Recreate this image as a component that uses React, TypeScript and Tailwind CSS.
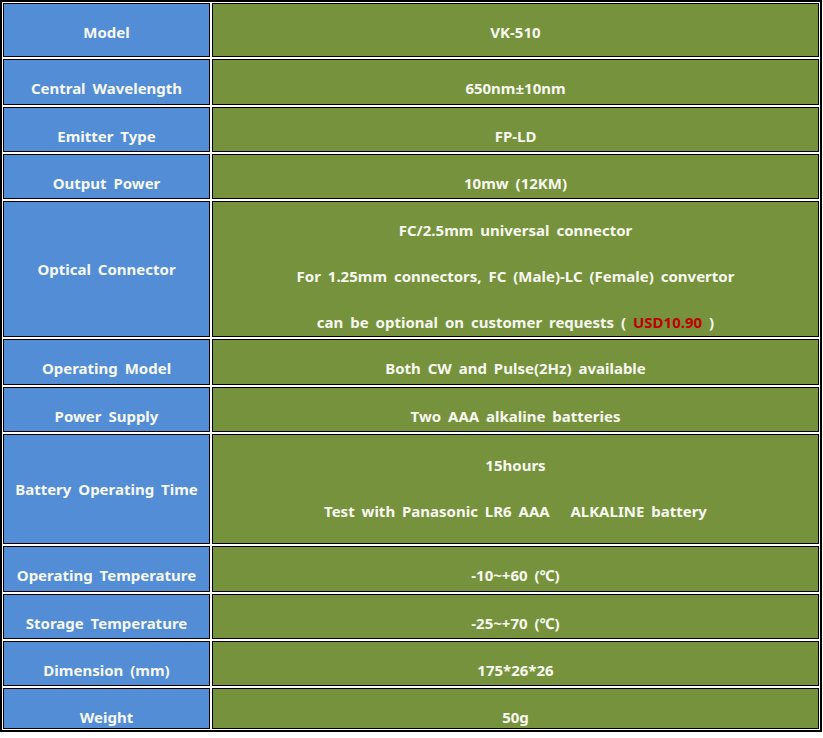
import React from "react";

type Row = {
  label: string;
  h: number;
  lines: React.ReactNode[];
  pt?: number;
};

const rows: Row[] = [
  { label: "Model", h: 54, lines: ["VK-510"] },
  { label: "Central Wavelength", h: 46, lines: ["650nm±10nm"] },
  { label: "Emitter Type", h: 45, lines: ["FP-LD"] },
  { label: "Output Power", h: 45, lines: ["10mw (12KM)"] },
  {
    label: "Optical Connector",
    h: 136,
    lines: [
      "FC/2.5mm universal connector",
      "For 1.25mm connectors, FC (Male)-LC (Female) convertor",
      <>
        can be optional on customer requests ({" "}
        <span className="text-[#c00000]">USD10.90</span> )
      </>,
    ],
  },
  { label: "Operating Model", h: 46, lines: ["Both CW and Pulse(2Hz) available"] },
  { label: "Power Supply", h: 45, lines: ["Two AAA alkaline batteries"] },
  {
    label: "Battery Operating Time",
    h: 110,
    lines: ["15hours", "Test with Panasonic LR6 AAA \u00a0\u00a0ALKALINE battery"],
    pt: 2,
  },
  { label: "Operating Temperature", h: 46, lines: ["-10~+60 (℃)"] },
  { label: "Storage Temperature", h: 45, lines: ["-25~+70 (℃)"] },
  { label: "Dimension (mm)", h: 45, lines: ["175*26*26"] },
  { label: "Weight", h: 41, lines: ["50g"] },
];

export default function App() {
  return (
    <div
      className="bg-white w-[823px] h-[738px]"
      style={{ fontFamily: '"Noto Sans", "Open Sans", sans-serif' }}
    >
      <div className="w-[822px] border-2 border-black bg-white p-px flex flex-col gap-[2px] text-[15px] font-bold leading-[20px] text-[#f6f8f0] [word-spacing:3px]">
        {rows.map((r, i) => {
          const single = r.lines.length === 1;
          return (
            <div
              key={i}
              className="grid grid-cols-[207px_1fr] gap-[2px]"
              style={{ height: r.h }}
            >
              <div
                className={
                  "border border-black bg-[#538dd5] flex justify-center text-center " +
                  (single ? "items-start pt-[18px]" : "items-center")
                }
              >
                {r.label}
              </div>
              <div
                className="border border-black bg-[#76923c] flex flex-col items-center gap-[26px] pt-[18px] text-center"
                style={r.pt ? { paddingTop: 18 + r.pt } : undefined}
              >
                {r.lines.map((l, j) => (
                  <div key={j}>{l}</div>
                ))}
              </div>
            </div>
          );
        })}
      </div>
    </div>
  );
}
